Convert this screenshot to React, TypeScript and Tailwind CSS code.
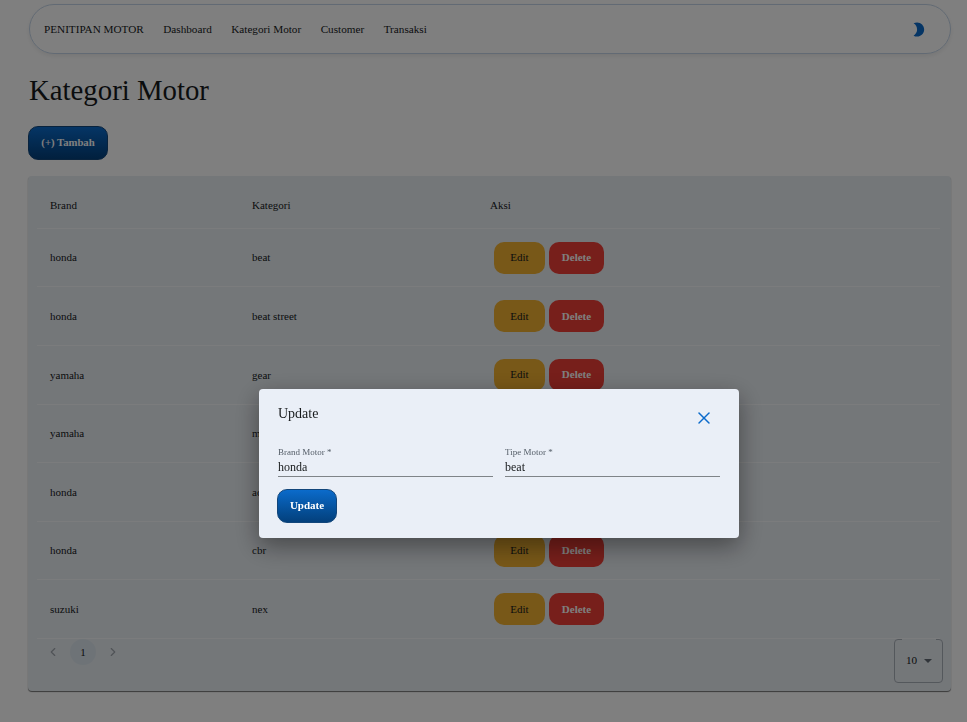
import React from "react";
import { ChevronLeft, ChevronRight, X } from "lucide-react";

const rows = [
  { brand: "honda", kategori: "beat" },
  { brand: "honda", kategori: "beat street" },
  { brand: "yamaha", kategori: "gear" },
  { brand: "yamaha", kategori: "matic" },
  { brand: "honda", kategori: "adv" },
  { brand: "honda", kategori: "cbr" },
  { brand: "suzuki", kategori: "nex" },
];

const navLinks = ["Dashboard", "Kategori Motor", "Customer", "Transaksi"];

function BlueButton({ children, className }: { children: React.ReactNode; className: string }) {
  return (
    <button className={`rounded-[10px] border border-[#12467b] bg-gradient-to-b from-[#0b6bcb] to-[#03407c] pb-px font-bold text-white ${className}`}>
      {children}
    </button>
  );
}

function Field({ label, value }: { label: string; value: string }) {
  return (
    <label className="block w-[215px] border-b border-[#7f8488]">
      <span className="block text-[9px] leading-[10px] text-[#555e68]">{label}</span>
      <span className="mt-[2px] block text-[12px] leading-[17px]">{value}</span>
    </label>
  );
}

export default function App() {
  return (
    <div className="relative min-h-[722px] bg-white pt-1 px-[28px] font-['Liberation_Serif',serif] text-[#171a1c]">
      {/* Navbar */}
      <nav className="ml-px w-[922px] h-[50px] flex items-center justify-between rounded-[25px] border border-[#c5d5e8] pl-[14px] pr-[23px] shadow-[0_2px_4px_rgba(21,21,21,0.08)]">
        <div className="flex items-center gap-[19.5px] text-[11.2px]">
          <span>PENITIPAN MOTOR</span>
          {navLinks.map((link) => (
            <a key={link}>{link}</a>
          ))}
        </div>
        <svg width="17" height="17" viewBox="0 0 24 24" fill="#0b6bcb">
          <path d="M10 2c-1.82 0-3.53.5-5 1.35C7.99 5.08 10 8.3 10 12s-2.01 6.92-5 8.65C6.47 21.5 8.18 22 10 22c5.52 0 10-4.48 10-10S15.52 2 10 2z" />
        </svg>
      </nav>

      <h1 className="ml-px mt-[18px] text-[28.8px] leading-[36px]">Kategori Motor</h1>

      <BlueButton className="mt-[18px] block w-[80px] h-[34px] text-[10.7px]">(+) Tambah</BlueButton>

      {/* Table card */}
      <div className="mt-4 w-[923px] h-[515px] rounded-[4px] bg-[#e9eef3] px-[9px] pt-[12px] shadow-[0_1px_1px_rgba(21,21,21,0.6)]">
        <table className="w-[903px] table-fixed border-collapse text-[11px]">
          <thead>
            <tr className="h-[40.4px] border-b border-[#f7f9fb] text-left">
              <th className="w-[202px] pl-[13px] pb-[6px] font-normal">Brand</th>
              <th className="w-[238px] pl-[13px] pb-[6px] font-normal">Kategori</th>
              <th className="pl-[13px] pb-[6px] font-normal">Aksi</th>
            </tr>
          </thead>
          <tbody>
            {rows.map((row, i) => (
              <tr key={i} className="h-[58.6px] border-b border-[#f7f9fb]">
                <td className="pl-[13px]">{row.brand}</td>
                <td className="pl-[13px]">{row.kategori}</td>
                <td className="pl-[17px]">
                  <div className="flex gap-1">
                    <button className="w-[51px] h-[32px] pb-px rounded-[10px] bg-[#f0b030] text-[11px]">Edit</button>
                    <button className="w-[55px] h-[32px] pb-px rounded-[10px] bg-[#ee3e36] text-[11px] font-bold text-white">Delete</button>
                  </div>
                </td>
              </tr>
            ))}
          </tbody>
        </table>
        <div className="flex items-start justify-between pl-[9px] mr-[-1px]">
          <div className="flex items-center gap-[10px] text-[#9fa6ad]">
            <ChevronLeft size={14} />
            <span className="flex h-[26px] w-[26px] items-center justify-center rounded-full bg-[#dde7ee] text-[11px] text-[#171a1c]">1</span>
            <ChevronRight size={14} />
          </div>
          <fieldset className="h-[44px] w-[49px] rounded-[4px] border border-[#a9b1b9]">
            <legend className="ml-[7px] h-0 w-[34px]" />
            <div className="flex h-full items-center pl-[11px] pb-[2px] text-[11.2px]">
              10
              <span className="ml-[7px] mt-[2px] h-0 w-0 border-x-[4px] border-t-[4px] border-x-transparent border-t-[#636b74]" />
            </div>
          </fieldset>
        </div>
      </div>

      {/* Backdrop + modal */}
      <div className="fixed inset-0 bg-black/50" />
      <div className="fixed left-[259px] top-[389px] h-[149px] w-[480px] rounded-[4px] bg-[#eaeff7] px-[19px] pt-[16px] shadow-[0_8px_24px_rgba(0,0,0,0.4)]">
        <div className="flex items-start justify-between">
          <h2 className="text-[14px] leading-[17px]">Update</h2>
          <X size={20} strokeWidth={1.8} className="mr-[6.5px] mt-[3px] text-[#0b6bcb]" />
        </div>
        <div className="mt-[19px] flex gap-[12px]">
          <Field label="Brand Motor *" value="honda" />
          <Field label="Tipe Motor *" value="beat" />
        </div>
        <BlueButton className="ml-[-1px] mt-[12px] block w-[60px] h-[34px] text-[11px]">Update</BlueButton>
      </div>
    </div>
  );
}
